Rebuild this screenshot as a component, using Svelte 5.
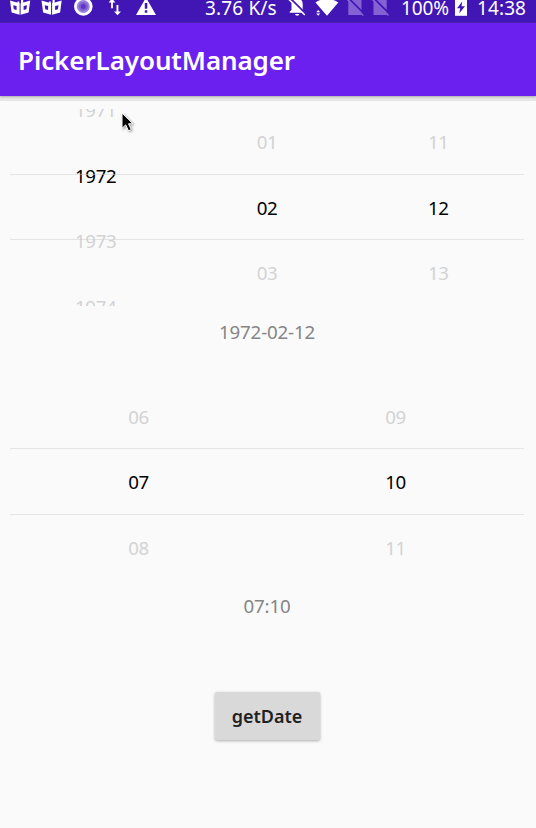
<script>
  const datePicker = [
    { values: ['1971', '1972', '1973', '1974'], selected: 1, offset: -32 },
    { values: ['01', '02', '03'], selected: 1, offset: 0 },
    { values: ['11', '12', '13'], selected: 1, offset: 0 }
  ];
  const timePicker = [
    { values: ['06', '07', '08'], selected: 1, offset: 0 },
    { values: ['09', '10', '11'], selected: 1, offset: 0 }
  ];
</script>

{#snippet picker(columns)}
  <div class="picker">
    {#each columns as column}
      <div class="column">
        <div class="wheel" style:margin-top="{column.offset}px">
          {#each column.values as value, i}
            <div class="item" class:selected={i === column.selected}>{value}</div>
          {/each}
        </div>
      </div>
    {/each}
    <div class="band"></div>
  </div>
{/snippet}

<div class="screen">
  <header class="status">
    <svg width="200" height="23" viewBox="0 0 200 23" fill="#fff">
      {#each [0, 31.5] as dx}
        <path fill-rule="evenodd" transform="translate({dx} 0)" d="M10 0.5 L19.6 3.2 V14.8 L11.6 12.5 Z M13.2 5.2 L13.8 9.2 L16.6 10 V6 Z M20.6 3.2 L30.2 0.5 L28.6 12.5 L20.6 14.8 Z M23.6 6 V10 L26.4 9.2 L27 5.2 Z" />
        <path transform="translate({dx} 0)" d="M17.4 1.6 H19.3 V5 H17.4 Z M21 0 H23.2 V5 H21 Z" />
      {/each}
      <circle cx="83.3" cy="6.5" r="9.3" />
      <circle cx="83.3" cy="6.5" r="6.5" fill="#9c83df" />
      <circle cx="83.3" cy="6.5" r="4.6" fill="#8062d3" />
      <circle cx="83.3" cy="6.5" r="2.5" fill="#5e36c4" />
      <path d="M111.1 8.3 V2.4 H108.6 L112 -1.5 L115.4 2.4 H112.9 V8.3 Z M116.5 5 H118.4 V11.4 H121 L117.5 15.2 L114 11.4 H116.5 Z" />
      <path fill-rule="evenodd" d="M146 -2.5 L156 15 H136 Z M144.8 3 V8.7 H147.3 V3 Z M144.8 10.2 V12.8 H147.3 V10.2 Z" />
    </svg>
    <span class="speed">3.76 K/s</span>
    <svg class="signals" width="112" height="23" viewBox="285 0 112 23" fill="#fff">
      <path d="M289.7 12.8 V11.7 L291.5 10 V4 Q291.5 -1 297 -2 Q302.7 -1 302.7 4 V10 L304.5 11.7 V12.8 Z M295 14 H299.4 Q299 15.8 297.2 15.8 Q295.3 15.8 295 14 Z" />
      <path d="M290 -2 L307 15" stroke="#4116b5" stroke-width="1.8" />
      <path d="M288.5 -1 L304.8 15" stroke="#fff" stroke-width="1.5" />
      <path d="M315.5 2.5 Q326.5 -5 338.3 2.5 L327 15.8 Z" />
      <path d="M316.2 12.3 L318.2 10 L320.2 12.3 Z M316.2 13.5 L318.2 15.8 L320.2 13.5 Z" />
      {#each [0, 25.2] as dx}
        <g transform="translate({dx} 0)">
          <path d="M348.3 -1 H361.5 V15 H348.3 Z" fill="#8462d4" />
          <path d="M347.6 -2.8 L364 13.6" stroke="#4116b5" stroke-width="1.8" />
          <path d="M346 -1.8 L363.3 15.5" stroke="#8462d4" stroke-width="1.6" />
        </g>
      {/each}
    </svg>
    <span class="percent">100%</span>
    <svg class="battery" width="12" height="23" viewBox="0 0 12 23">
      <path d="M0 0 H12 V15.8 H0 Z" fill="#fff" />
      <path d="M7.2 1.5 L2 8.3 H5.2 L4.2 13.5 L10 6.3 H6.6 Z" fill="#4116b5" />
    </svg>
    <span class="clock">14:38</span>
  </header>
  <div class="appbar"><h1>PickerLayoutManager</h1></div>
  <main>
    {@render picker(datePicker)}
    <p class="date">1972-02-12</p>
    {@render picker(timePicker)}
    <p class="time">07:10</p>
    <button>getDate</button>
  </main>
  <svg class="cursor" width="18" height="26" viewBox="0 0 18 26">
    <path d="M2 2 V17.3 L5.7 13.9 L8.5 19.8 L11.3 18.5 L8.5 12.8 H13 Z" fill="#000" stroke="#fff" stroke-width="1" />
  </svg>
</div>

<style>
  :global(body) { margin: 0; background: #fafafa; }
  .screen {
    position: relative;
    width: 536px;
    height: 828px;
    overflow: hidden;
    background: #fafafa;
    font-family: "Noto Sans", sans-serif;
  }
  .status {
    display: flex;
    height: 23px;
    background: #4116b5;
    color: #fff;
    font-size: 19px;
    line-height: 16px;
    white-space: nowrap;
  }
  svg { display: block; flex: none; }
  .speed { width: 80px; margin-left: 5px; letter-spacing: 0.15px; }
  .percent { width: 54px; margin-left: 4px; letter-spacing: -0.1px; }
  .clock { margin-left: 10px; letter-spacing: 0.1px; }
  .appbar {
    display: flex;
    align-items: center;
    height: 73px;
    padding-left: 18px;
    background: #6b20ef;
    box-shadow: 0 1px 2px #aaa, 0 5px 0 #e6e6e6;
  }
  h1 { margin: 0; color: #fff; font-size: 26px; font-weight: 600; line-height: 36px; letter-spacing: -0.1px; }
  main {
    display: flex;
    flex-direction: column;
    align-items: center;
    padding: 13px 12px 0 10px;
  }
  .picker { position: relative; display: flex; width: 514px; height: 196.5px; }
  .column { flex: 1; overflow: hidden; }
  .item {
    height: 65.5px;
    color: #d3d3d3;
    font-size: 18.7px;
    letter-spacing: -0.4px;
    line-height: 66px;
    text-align: center;
  }
  .selected { color: #000; }
  .band {
    position: absolute;
    top: 65px;
    left: 0;
    right: 0;
    height: 64px;
    border-top: 1px solid rgba(205, 205, 205, 0.5);
    border-bottom: 1px solid rgba(205, 205, 205, 0.5);
  }
  p { margin: 0; color: #858585; font-size: 18.7px; line-height: 26px; letter-spacing: -0.15px; }
  .date { margin-top: 13px; margin-bottom: 39px; }
  .picker:nth-of-type(2) .band { top: 64.4px; height: 65px; }
  .time { margin-top: 13px; margin-bottom: 73px; }
  button {
    width: 105px;
    height: 48px;
    padding: 0;
    border: 0;
    border-radius: 2px;
    background: #d9d9d9;
    box-shadow: 0 1px 3px #aaa;
    color: #212121;
    font: 600 18px/48px "Noto Sans", sans-serif;
  }
  .cursor { position: absolute; left: 120px; top: 111px; filter: drop-shadow(1px 1px 1px #999); }
</style>
